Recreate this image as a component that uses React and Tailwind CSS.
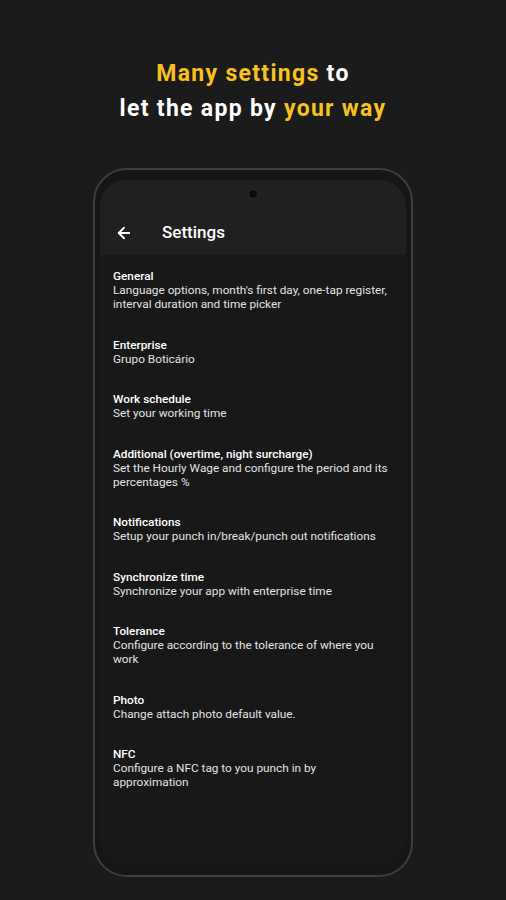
import { ArrowLeft } from 'lucide-react';

const items = [
  { title: 'General', desc: "Language options, month's first day, one-tap register, interval duration and time picker" },
  { title: 'Enterprise', desc: 'Grupo Boticário' },
  { title: 'Work schedule', desc: 'Set your working time' },
  { title: 'Additional (overtime, night surcharge)', desc: 'Set the Hourly Wage and configure the period and its percentages %' },
  { title: 'Notifications', desc: 'Setup your punch in/break/punch out notifications' },
  { title: 'Synchronize time', desc: 'Synchronize your app with enterprise time' },
  { title: 'Tolerance', desc: 'Configure according to the tolerance of where you work' },
  { title: 'Photo', desc: 'Change attach photo default value.' },
  { title: 'NFC', desc: 'Configure a NFC tag to you punch in by approximation' },
];

const App = () => {
  return (
    <div className="w-[506px] h-[900px] bg-[#1b1b1b] flex flex-col items-center font-['Roboto',sans-serif] overflow-hidden">
      <h1 className="pt-[56px] text-center text-[23px] leading-[35px] font-bold tracking-[1.3px] text-white">
        <span className="text-[#f7c21d]">Many settings</span> to
        <br />
        let the app by <span className="text-[#f7c21d]">your way</span>
      </h1>

      <div className="mt-[42px] w-[320px] h-[709px] rounded-[34px] border-2 border-[#394040] bg-[#161616] pt-[10px] pb-[10px] px-[5px] flex">
        <div className="flex-1 rounded-[26px] overflow-hidden bg-[#181818] flex flex-col">
          <div className="h-[75px] bg-[#202020] flex flex-col">
            <div className="h-[28px] flex items-center justify-center">
              <div className="w-[10px] h-[10px] rounded-full bg-[#0c0c0c] border border-[#2c2c2c]" />
            </div>
            <div className="flex-1 flex items-center pl-[15px] pt-[2px]">
              <ArrowLeft size={18} strokeWidth={2.4} className="text-white" />
              <span className="ml-[29px] text-[17px] font-medium text-white">Settings</span>
            </div>
          </div>

          <div className="px-[13px] pt-[14px] flex flex-col gap-[26.5px]">
            {items.map((item) => (
              <div key={item.title} className="text-[11.8px] leading-[14px] text-[#e2e2e2]">
                <div className="font-medium text-white">{item.title}</div>
                <div>{item.desc}</div>
              </div>
            ))}
          </div>
        </div>
      </div>
    </div>
  );
};

export default App;
